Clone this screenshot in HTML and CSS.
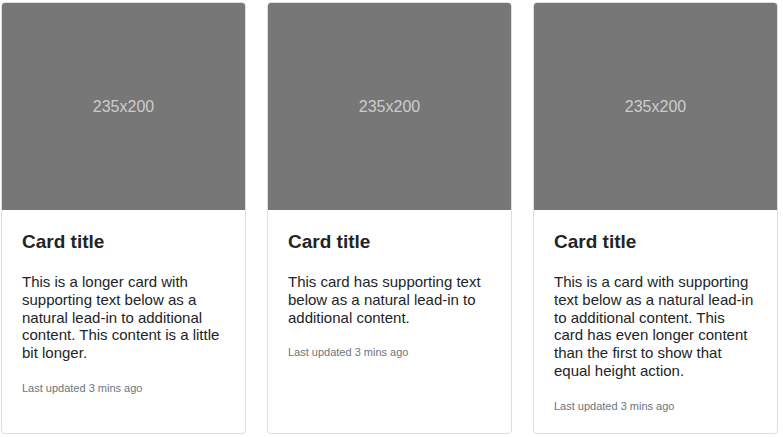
FILE: index.html
```html
<!DOCTYPE html>
<html>
<head>
<meta charset="utf-8">
<link rel="stylesheet" href="styles.css">
</head>
<body>
<div class="deck">
  <div class="card">
    <div class="card-img">235x200</div>
    <div class="card-body">
      <h5 class="card-title">Card title</h5>
      <p class="card-text">This is a longer card with supporting text below as a natural lead-in to additional content. This content is a little bit longer.</p>
      <p class="card-meta">Last updated 3 mins ago</p>
    </div>
  </div>
  <div class="card">
    <div class="card-img">235x200</div>
    <div class="card-body">
      <h5 class="card-title">Card title</h5>
      <p class="card-text">This card has supporting text below as a natural lead-in to additional content.</p>
      <p class="card-meta">Last updated 3 mins ago</p>
    </div>
  </div>
  <div class="card">
    <div class="card-img">235x200</div>
    <div class="card-body">
      <h5 class="card-title">Card title</h5>
      <p class="card-text">This is a card with supporting text below as a natural lead-in to additional content. This card has even longer content than the first to show that equal height action.</p>
      <p class="card-meta">Last updated 3 mins ago</p>
    </div>
  </div>
</div>
</body>
</html>
```
FILE: styles.css
```css
html, body {
  margin: 0;
  padding: 0;
  background: #fff;
}
body {
  font-family: "Liberation Sans", Arial, sans-serif;
  color: #212529;
}
.deck {
  display: flex;
  gap: 21px;
  padding: 2px 5px 0 1px;
  align-items: stretch;
}
.card {
  flex: 1 1 0;
  min-width: 0;
  border: 1px solid rgba(0, 0, 0, 0.13);
  border-radius: 4px;
  overflow: hidden;
  display: flex;
  flex-direction: column;
}
.card-img {
  height: 207px;
  background: #777;
  color: #ccc;
  font-size: 16px;
  display: flex;
  align-items: center;
  justify-content: center;
}
.card-body {
  padding: 20px;
}
.card-title {
  margin: 0 0 20px;
  font-size: 19px;
  line-height: 23px;
  font-weight: bold;
  color: #212529;
}
.card-text {
  margin: 0;
  font-size: 15px;
  line-height: 17.75px;
  color: #212529;
}
.card-meta {
  margin: 19px 0 0;
  font-size: 11px;
  line-height: 14px;
  color: #6c757d;
}
```
